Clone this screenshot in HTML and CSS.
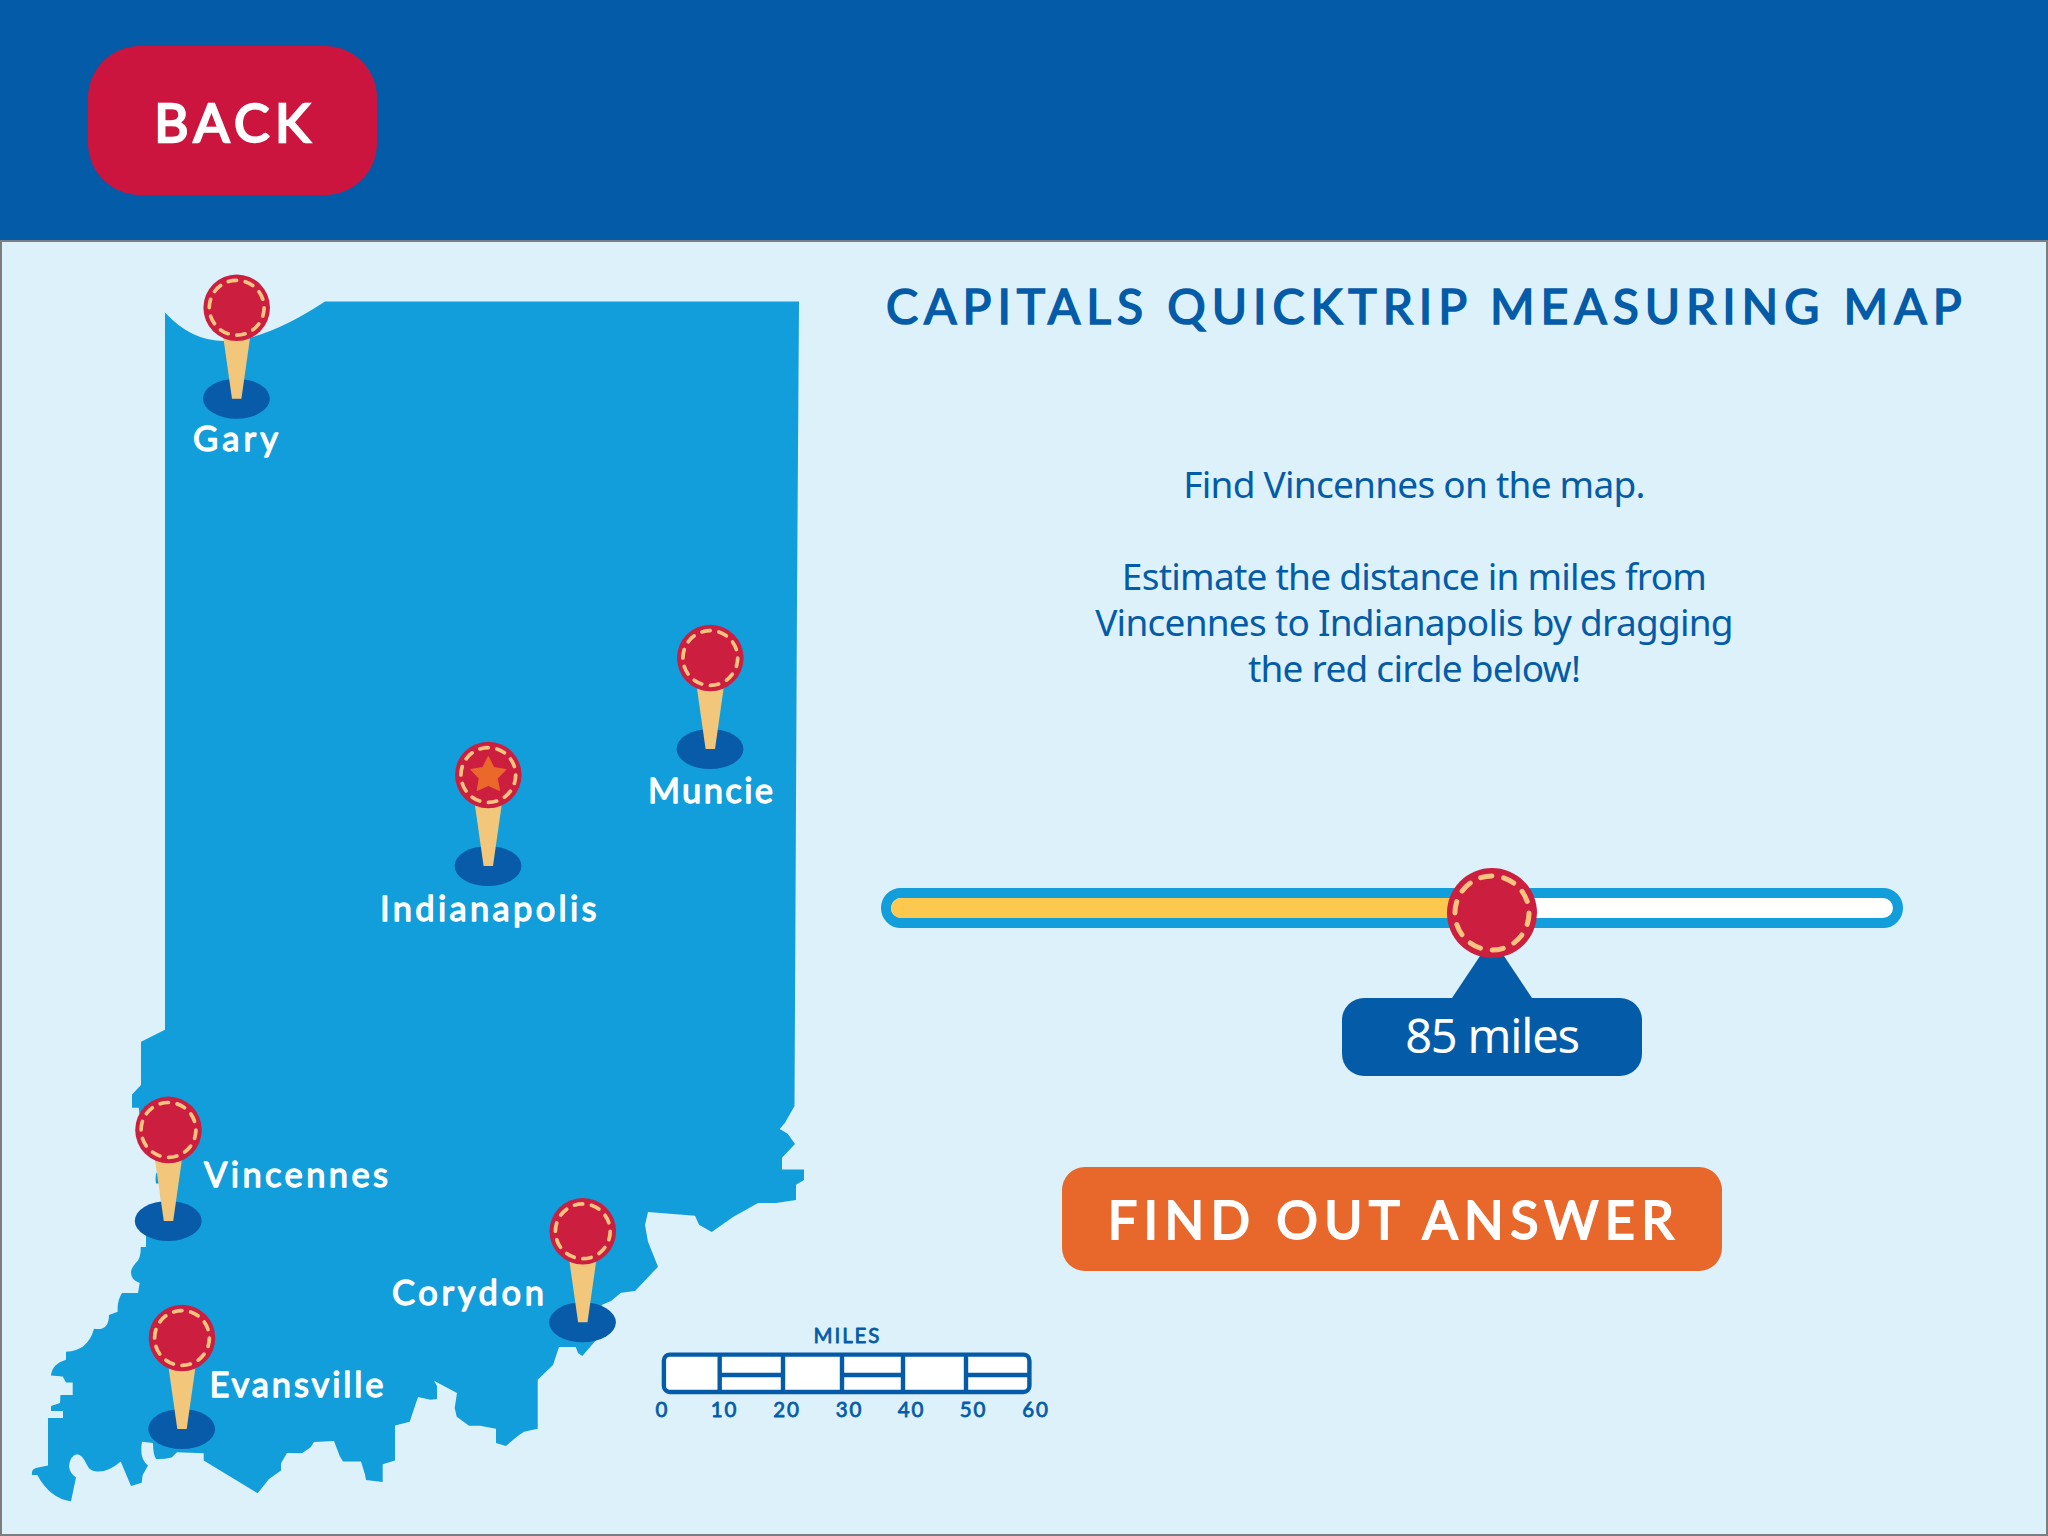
FILE: index.html
```html
<!DOCTYPE html>
<html lang="en">
<head>
<meta charset="utf-8">
<title>Capitals Quicktrip Measuring Map</title>
<link rel="stylesheet" href="styles.css">
</head>
<body>
<header class="topbar">
  <button class="back" type="button">BACK</button>
</header>
<main class="stage">
  <svg class="map" viewBox="2 242 878 1292" role="img" aria-label="Map of Indiana">
    <defs>
      <g id="head">
        <circle class="head" r="33.3"/>
        <circle class="stitch" r="27.4" transform="rotate(-107.75)" pathLength="100"/>
      </g>
      <g id="pin">
        <ellipse class="shadow" cx="-0.3" cy="91" rx="33.4" ry="20"/>
        <path class="stem" d="M-13.8 27H13.8L4.7 91H-4.7Z"/>
        <use href="#head"/>
      </g>
    </defs>
    <path class="state" d="M165 312.500Q191 341 224 341Q265 341 325 301.500H799L797 600L794.5 1106L785 1122.7L779.7 1129L787.7 1133.7L795 1144L782 1157.7V1169.5H804V1180L796 1184.7V1200L776 1203H758L733 1217L711.7 1232L699 1224.7L695 1215.7L648 1212L645 1225L648 1241.7L658 1266.7L635 1291L621 1292.7L611 1301L601.7 1305L590 1322L597 1339L582.3 1356L578 1353L575.7 1347H559L553 1365L537.7 1379.7V1428.7L524 1431.7L516.7 1436.7L506 1446L496 1443V1428.7L480 1425.7H469L456.7 1416.7L454.7 1408L457 1393L434 1380.7L437 1386V1399L430.7 1399.7L418 1397L409.7 1421.7L395 1425.6V1460.5L382.7 1464.3V1482L366 1480L365 1474.5L361 1461.5H343L339.7 1456L334 1441L314 1442L310.7 1447.2L302 1453.3L287 1453L281 1463.3V1470.4L269 1479L257.7 1493.3L203.7 1460.5V1453.3L177 1452.3L171.7 1457.4Q163 1459.5 156 1459Q153 1454.3 153 1443L142 1441.7Q139 1458.4 148 1465.6L142.7 1474.9L141.7 1482.7L131 1486L120.7 1461.5Q109 1471.8 97.7 1471.5Q90 1471.8 86.7 1464.6Q82 1454.3 77 1454.3Q70 1455.4 69 1466.6Q70 1473.8 76 1477.6L71 1501.2Q50 1498.5 37.3 1474.9H32Q31 1468.7 37 1467.7L48 1465.6V1418.1H63V1411H51V1406.1L60 1403L60.5 1394.9H72.7V1382.5H66L62.7 1376.4L51 1375.4Q52 1364 66 1359.7V1351.8Q88 1350.8 94 1328.7Q109 1331.3 109 1314.9L117.7 1311.8Q117 1300.5 122 1293H138L139.7 1283Q131 1280 131 1272.5Q131 1267.7 138 1260.5Q141 1255.4 140.7 1246.9H146V1232.8L162 1220.5L160 1183.6H156Q154.500 1174.4 157.5 1171.3L155 1159L139.700 1116L138.7 1107.7H132V1094.4L141 1085V1041.700L165 1029.800Z"/>
    <use href="#pin" x="236.7" y="307.7"/>
    <use href="#pin" x="710.3" y="658"/>
    <use href="#pin" x="488.3" y="775"/>
    <path class="star" d="M488.300 756.500L493.800 767.500L506 769.500L497.300 778.500L499.500 790.500L488.300 785.500L477.200 790.500L479.200 778.500L470.700 769.500L482.800 767.500Z"/>
    <use href="#pin" x="168.5" y="1129.900"/>
    <use href="#pin" x="182" y="1338"/>
    <use href="#pin" x="582.8" y="1231.3"/>
    <g class="cities">
      <text x="193" y="451" textLength="85">Gary</text>
      <text x="648" y="802.500" textLength="125">Muncie</text>
      <text x="380" y="921" textLength="216.500">Indianapolis</text>
      <text x="204" y="1186.500" textLength="184">Vincennes</text>
      <text x="209.500" y="1396.500" textLength="174">Evansville</text>
      <text x="392" y="1304.500" textLength="152">Corydon</text>
    </g>
    <g class="scale">
      <rect x="663.900" y="1354.600" width="365.500" height="37.400" rx="6"/>
      <path d="M719.700 1354V1392M783 1354V1392M842 1354V1392M903 1354V1392M966 1354V1392M719.700 1375H783M842 1375H903M966 1375H1029"/>
    </g>
    <g class="scale-text">
      <text x="847.500" y="1343">MILES</text>
      <text x="662.500" y="1416.500">0</text>
      <text x="724.500" y="1416.500">10</text>
      <text x="787" y="1416.500">20</text>
      <text x="849.500" y="1416.500">30</text>
      <text x="911.500" y="1416.500">40</text>
      <text x="973.500" y="1416.500">50</text>
      <text x="1036" y="1416.500">60</text>
    </g>
  </svg>
  <section class="panel">
    <h1 class="title">CAPITALS QUICKTRIP MEASURING MAP</h1>
    <div class="prompt">
      <p>Find Vincennes on the map.</p>
      <p>Estimate the distance in miles from<br>Vincennes to Indianapolis by dragging<br>the red circle below!</p>
    </div>
    <div class="slider">
      <div class="fill"></div>
      <div class="marker">
        <svg class="knob" viewBox="-33.3 -33.3 66.600 66.600"><use href="#head"/></svg>
        <div class="arrow"></div>
        <output class="value">85 miles</output>
      </div>
    </div>
    <button class="answer" type="button">FIND OUT ANSWER</button>
  </section>
</main>
</body>
</html>
```
FILE: styles.css
```css
* { box-sizing: border-box; }
body {
  margin: 0;
  width: 2048px;
  height: 1536px;
  display: flex;
  flex-direction: column;
  overflow: hidden;
  background: #ddf1fb;
  font-family: Lato, "Open Sans", sans-serif;
  color: #045ca8;
}
button { border: 0; padding: 0; font-family: inherit; color: #fff; }

.topbar {
  flex: none;
  height: 240px;
  padding: 46px 88px;
  background: #045ca8;
}
.back {
  width: 289px;
  height: 149px;
  padding: 2px 0 0 5px;
  border-radius: 52px;
  background: #cb153e;
  font-size: 53px;
  font-weight: 400;
  letter-spacing: 5.6px;
  -webkit-text-stroke: 2.4px #fff;
}

.stage {
  flex: 1;
  display: grid;
  grid-template-columns: 878px 1fr;
  border: 2px solid #7b7d82;
  background: #ddf1fb;
}
.map { width: 878px; height: 1292px; overflow: visible; }
.state { fill: #129ddb; }
.head { fill: #cc1f3f; }
.stitch {
  fill: none;
  stroke: #fac47f;
  stroke-width: 3.7;
  stroke-linecap: round;
  stroke-dasharray: 4.9 5.1;
}
.shadow { fill: #085ba8; }
.stem { fill: #f2c77c; }
.star { fill: #ea682a; stroke: #ea682a; stroke-width: 1; stroke-linejoin: round; }
.cities {
  fill: #fff;
  stroke: #fff;
  stroke-width: 1.3;
  stroke-linejoin: round;
  font-size: 34.5px;
  font-weight: 400;
}
.scale { fill: #fff; stroke: #045ca8; stroke-width: 4.4; }
.scale-text {
  fill: #045ca8;
  stroke: #045ca8;
  stroke-width: .8;
  stroke-linejoin: round;
  font-size: 20.5px;
  font-weight: 400;
  letter-spacing: 1.9px;
  text-anchor: middle;
}

.panel { display: flex; flex-direction: column; }
.title {
  margin: 34px 0 0 6px;
  font-size: 48px;
  line-height: 60px;
  font-weight: 400;
  letter-spacing: 6px;
  -webkit-text-stroke: 1.7px #045ca8;
  white-space: nowrap;
}
.prompt {
  width: 700px;
  margin: 125px 0 0 184px;
  text-align: center;
  font-family: "Noto Sans", sans-serif;
  font-size: 37px;
  line-height: 46px;
  letter-spacing: -.75px;
}
.prompt p { margin: 0 0 46px; }
.slider {
  position: relative;
  width: 1022px;
  height: 40px;
  margin: 151px 0 0 1px;
  border: 10px solid #129ddb;
  border-radius: 20px;
  background: #fff;
}
.fill { width: 601px; height: 20px; border-radius: 10px 0 0 10px; background: #fdc84e; }
.marker {
  position: absolute;
  left: 451px;
  top: -30px;
  width: 300px;
  display: flex;
  flex-direction: column;
  align-items: center;
}
.knob { position: relative; z-index: 1; width: 90px; height: 90px; }
.arrow {
  width: 80px;
  height: 60px;
  margin-top: -20px;
  background: #045ca8;
  clip-path: polygon(50% 0, 100% 100%, 0 100%);
}
.value {
  width: 300px;
  height: 78px;
  border-radius: 22px;
  background: #045ca8;
  color: #fff;
  text-align: center;
  font: 47px/74px "Noto Sans", sans-serif;
  letter-spacing: -1.2px;
}
.answer {
  width: 660px;
  height: 104px;
  margin: 239px 0 0 182px;
  padding: 0 0 0 4px;
  border-radius: 23px;
  background: #e8672a;
  font-size: 52px;
  font-weight: 400;
  letter-spacing: 6.4px;
  -webkit-text-stroke: 2px #fff;
}
```
